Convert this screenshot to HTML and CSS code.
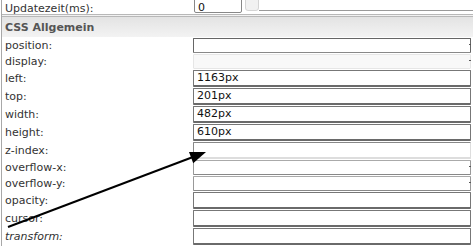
FILE: index.html
```html
<!DOCTYPE html>
<html>
<head>
<meta charset="utf-8">
<title>CSS Allgemein</title>
<link rel="stylesheet" href="styles.css">
</head>
<body>
<div class="panel">
  <div class="row row-top">
    <span class="lbl">Updatezeit(ms):</span>
    <div class="val">
      <span class="box num">0</span>
      <span class="slider"><span class="handle"></span></span>
    </div>
  </div>

  <div class="section">CSS Allgemein</div>

  <div class="row sel"><span class="lbl">position:</span><span class="box select"><i class="caret"></i></span></div>
  <div class="row sel"><span class="lbl">display:</span><span class="box select off"><i class="caret"></i></span></div>
  <div class="row"><span class="lbl">left:</span><span class="box">1163px</span></div>
  <div class="row"><span class="lbl">top:</span><span class="box">201px</span></div>
  <div class="row"><span class="lbl">width:</span><span class="box">482px</span></div>
  <div class="row"><span class="lbl">height:</span><span class="box">610px</span></div>
  <div class="row"><span class="lbl">z-index:</span><span class="box plain"></span></div>
  <div class="row sel"><span class="lbl">overflow-x:</span><span class="box select light"><i class="caret"></i></span></div>
  <div class="row sel"><span class="lbl">overflow-y:</span><span class="box select light"><i class="caret"></i></span></div>
  <div class="row"><span class="lbl">opacity:</span><span class="box"></span></div>
  <div class="row"><span class="lbl">cursor:</span><span class="box"></span></div>
  <div class="row"><span class="lbl lbl-em">transform:</span><span class="box"></span></div>

  <div class="footer"></div>
</div>

<!-- annotation arrow drawn over the form -->
<svg class="arrow" width="473" height="250" viewBox="0 0 473 250">
  <line x1="8" y1="227" x2="193" y2="157" stroke="#000" stroke-width="2"/>
  <polygon points="206,152 193.2,163.3 189,152.1" fill="#000"/>
</svg>
</body>
</html>
```

FILE: styles.css
```css
body {
  margin: 0;
  background: #fff;
  font-family: "DejaVu Sans", Verdana, sans-serif;
  font-size: 11px;
  color: #333;
  overflow: hidden;
}

.panel {
  margin-left: 1px;
  border-left: 1px solid #a8a8a8;
  height: 250px;
}

.row {
  display: grid;
  grid-template-columns: 191px 1fr;
  height: 18px;
  align-items: start;
}

.row.sel {
  height: 16px;
}

.lbl {
  padding-left: 3px;
  padding-top: 1px;
  line-height: 18px;
  white-space: nowrap;
}

.row.sel .lbl {
  padding-top: 0;
  line-height: 17px;
}

.lbl-em {
  font-style: italic;
}

.box {
  display: block;
  box-sizing: border-box;
  height: 17px;
  margin-top: 1px;
  margin-right: 2px;
  padding-left: 3px;
  border: 1px solid #777;
  border-bottom: 2px solid #6a6a6a;
  border-radius: 1px;
  color: #111;
  line-height: 14px;
  background: #fff;
  position: relative;
}

.box.plain {
  border-color: #888 #ddd #ddd #888;
}

.box.select {
  height: 15px;
  border: 1px solid #666;
  border-bottom-color: #888;
}

.box.select.off {
  background: #f8f8f8;
  border-color: #e6e6e6;
}

.box.select.light {
  border-color: #aaa #999 #888 #999;
}

.caret {
  position: absolute;
  right: -1px;
  top: 5px;
  width: 2px;
  height: 1px;
  background: #555;
}

/* first row, cut off at the top */
.row-top {
  margin-top: -4px;
}

.row-top .lbl {
  padding-top: 4px;
  line-height: 17px;
}

.val {
  display: flex;
  align-items: flex-start;
  height: 18px;
}

.box.num {
  width: 48px;
  height: 17px;
  margin: 0 0 0 1px;
  padding-top: 4px;
  border: 1px solid #888;
  border-radius: 0 0 2px 2px;
  line-height: 13px;
}

.slider {
  flex: 1;
  display: flex;
  align-items: flex-start;
  height: 18px;
  margin-left: 3px;
}

.handle {
  width: 14px;
  height: 15px;
  box-sizing: border-box;
  background: #f1f1f1;
  border: 1px solid #d4d4d4;
  border-radius: 0 0 3px 3px;
}

.slider::after {
  content: "";
  flex: 1;
  height: 1px;
  margin-top: 14px;
  background: #9a9a9a;
}

.section {
  height: 20px;
  border-top: 3px double #b8b8b8;
  background: linear-gradient(#e3e3e3, #f3f3f3);
  padding-left: 3px;
  font-weight: bold;
  font-size: 11px;
  line-height: 21px;
  color: #555;
}

.footer {
  margin: 1px 0 0 1px;
  height: 6px;
  background: #efefef;
}

.arrow {
  position: absolute;
  left: 0;
  top: 0;
}
```
